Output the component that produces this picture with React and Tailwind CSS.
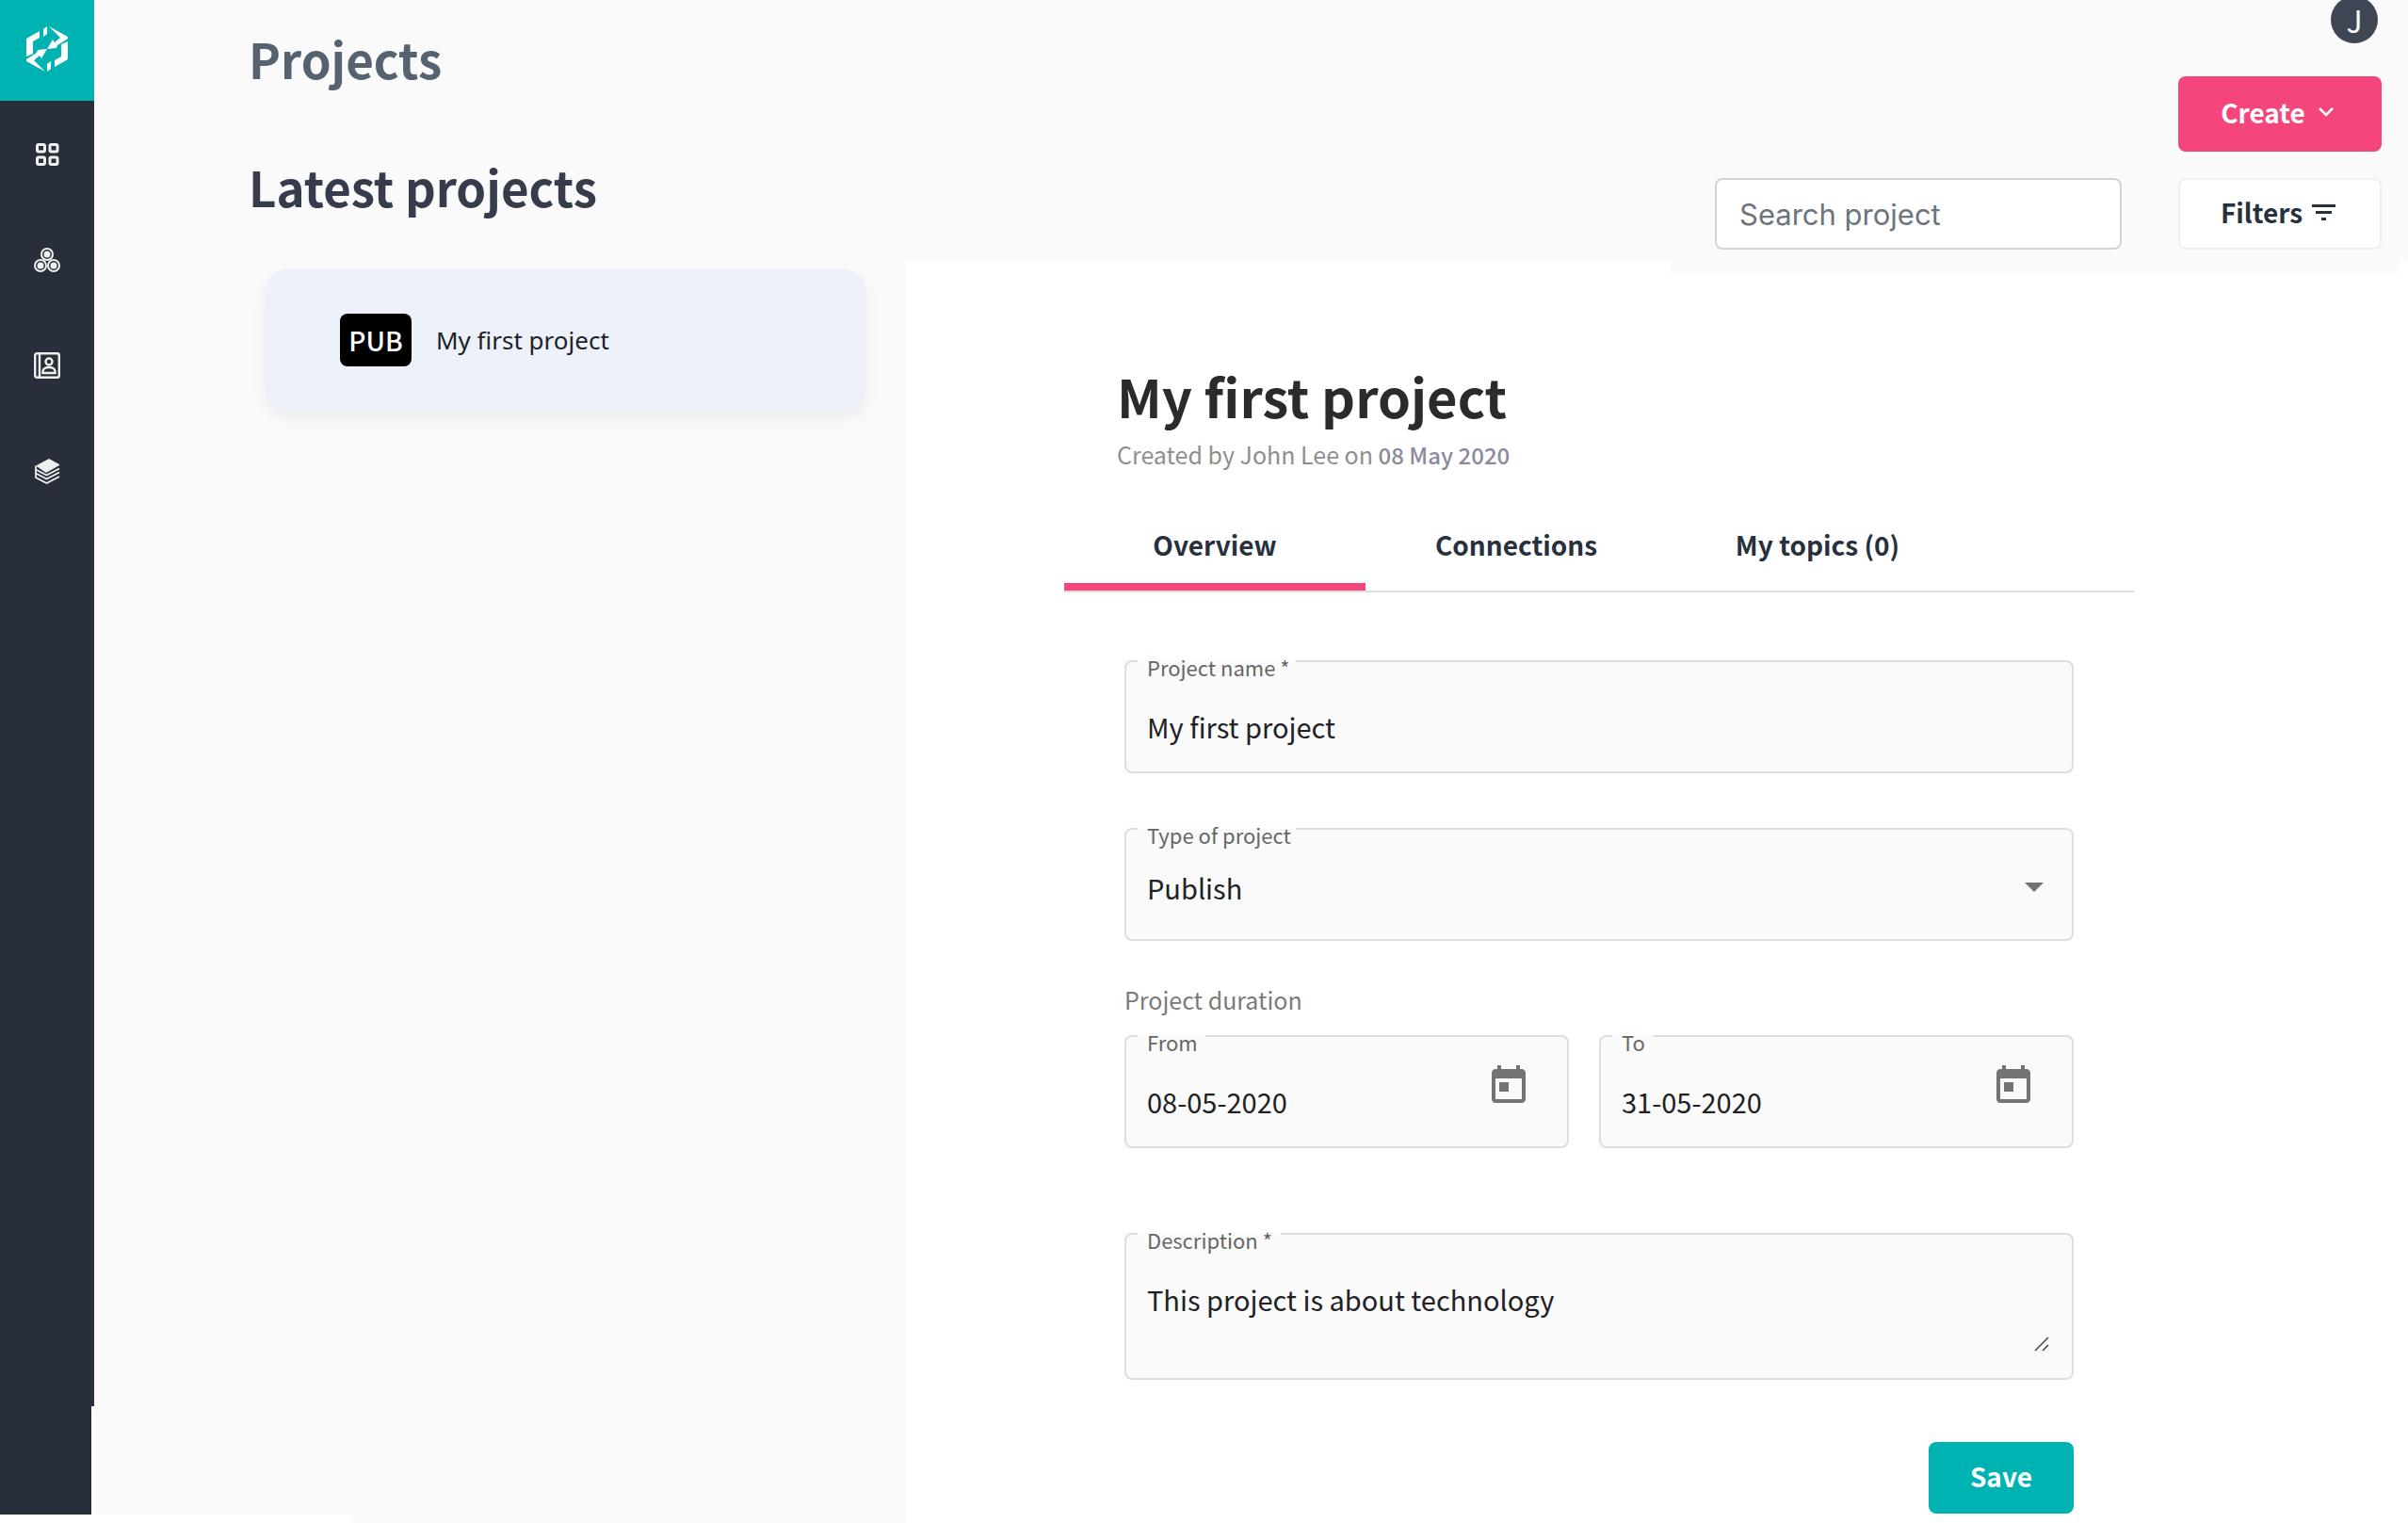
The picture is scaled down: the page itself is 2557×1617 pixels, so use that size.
import React from "react";

const CalendarIcon = () => (
  <svg viewBox="0 0 24 24" className="h-12 w-12" fill="#737373">
    <path d="M19 3h-1V1h-2v2H8V1H6v2H5c-1.11 0-1.99.9-1.99 2L3 19c0 1.1.89 2 2 2h14c1.1 0 2-.9 2-2V5c0-1.1-.9-2-2-2zm0 16H5V8h14v11zM7 10h5v5H7z" />
  </svg>
);

function Field({ id, label, className = "h-30", notch, children }) {
  return (
    <div className={`relative rounded-lg border-2 border-[#dedede] bg-[#fafafa] ${className}`}>
      <label
        htmlFor={id}
        className={`absolute -top-0.5 left-3 h-7 whitespace-nowrap bg-[#fafafa] pl-2.5 text-[22px]/[14px] text-[#666] ${notch}`}
      >
        {label}
      </label>
      {children}
    </div>
  );
}

function DateField({ id, label, value, notch, className }) {
  return (
    <Field id={id} label={label} notch={notch} className={`h-30 ${className}`}>
      <div className="flex h-full items-start justify-between pr-[38px] pl-[22px]">
        <input id={id} defaultValue={value} className="mt-[46px] h-11 w-60 min-w-0 bg-transparent text-[29px] text-[#202124] outline-none" />
        <button type="button" aria-label={`Pick ${label} date`} className="mt-7">
          <CalendarIcon />
        </button>
      </div>
    </Field>
  );
}

function NavIcon({ label, children }) {
  return (
    <a href="#" aria-label={label} className="flex h-28 w-full items-center justify-center text-[#efefef]">
      <svg viewBox="0 0 28 28" className="h-7 w-7" fill="none" stroke="currentColor">
        {children}
      </svg>
    </a>
  );
}

function Sidebar() {
  return (
    <aside className="flex w-[100px] shrink-0 flex-col">
      <a href="#" aria-label="Home" className="flex h-[107px] items-center justify-center bg-[#00b3b3]">
        <svg viewBox="0 0 46 48" className="-mt-1 h-12 w-[46px]" fill="#fff">
          <g id="half">
            <path d="M1 13 15 5v7L8 16v13L1 32z" />
            <path d="M19 3l4-3v8l-4 3z" />
            <path d="M25 0 45 11v2L34 20l-1 3-10 1 6-10 2 3 6-5z" />
          </g>
          <use href="#half" transform="rotate(180 23 24)" />
        </svg>
      </a>
      <nav className="flex grow flex-col bg-[#282e3a] pt-px">
        <NavIcon label="Dashboard">
          <g strokeWidth="3">
            <rect x="3.5" y="3.5" width="8" height="7.5" rx="1.5" />
            <rect x="17" y="3.5" width="8" height="7.5" rx="1.5" />
            <rect x="3.5" y="17" width="8" height="7.5" rx="1.5" />
            <rect x="17" y="17" width="8" height="7.5" rx="1.5" />
          </g>
        </NavIcon>
        <NavIcon label="Connections">
          {[[14, 8], [7, 20], [21, 20]].map(([x, y]) => (
            <g key={`${x}-${y}`}>
              <circle cx={x} cy={y} r="6" strokeWidth="2" />
              <circle cx={x} cy={y} r="3.5" fill="currentColor" stroke="none" />
            </g>
          ))}
        </NavIcon>
        <NavIcon label="Contacts">
          <g strokeWidth="2.4">
            <rect x="1.2" y="1.2" width="25.6" height="25.6" rx="2" />
            <path d="M6 1v26" />
            <circle cx="16" cy="10" r="3.5" />
            <path d="M9.500 22v-1.500c0-6 13-6 13 0V22z" />
          </g>
        </NavIcon>
        <NavIcon label="Topics">
          <path d="M2 8.500 16 1l11 6v1L13 16z" fill="currentColor" stroke="none" />
          <path d="M2 8.500v12.500l11.500 6L27 20M2 12.500l11.500 6L27 11.500M2 16.500l11.500 6L27 15.500" strokeWidth="1.800" />
        </NavIcon>
      </nav>
      <div className="h-[124px] border-r-[3px] border-b-[9px] border-white bg-[#282e3a]" />
    </aside>
  );
}

export default function App() {
  return (
    <div className="flex min-h-screen bg-[#fafafa] font-['Noto_Sans_CJK_SC',sans-serif]">
      <Sidebar />

      <section className="flex w-[862px] shrink-0 flex-col pt-[22px] pr-[42px] pl-41">
        <h1 className="text-[51px]/[80px] font-bold text-[#566270]">Projects</h1>
        <h2 className="mt-14 text-[51px]/[80px] font-bold text-[#363c4c]">Latest projects</h2>
        <a href="#" className="mt-12 ml-[17px] flex h-[150px] shrink-0 items-center gap-[26px] rounded-3xl bg-[#edf1f9] pl-20 shadow-[0_8px_16px_rgba(0,0,0,0.06)]">
          <span className="flex h-14 w-19 items-center justify-center rounded-lg bg-black text-[28px] font-medium text-white">PUB</span>
          <span className="font-['Noto_Sans',sans-serif] text-[26px] text-[#202228]">My first project</span>
        </a>
        <div className="mt-auto -ml-41 h-[9px] w-68 bg-white" />
      </section>

      <div className="flex min-w-0 grow flex-col">
        <header className="flex h-[278px] shrink-0 flex-col items-end pr-7">
          <button type="button" className="-mt-1 mr-1 flex h-[50px] w-[50px] items-center justify-center rounded-full bg-[#3f4653] text-[32px] text-white">J</button>
          <button type="button" className="mt-[35px] flex h-20 w-54 items-center justify-center gap-3 rounded-lg bg-[#f5467c] pr-1 pb-1 text-[28px] font-bold text-white">
            Create
            <svg viewBox="0 0 20 20" className="h-5 w-5" fill="none" stroke="currentColor" strokeWidth="2.5"><path d="M3 6l7 7 7-7" /></svg>
          </button>
          <div className="mt-7 flex gap-15">
            <input aria-label="Search project" placeholder="Search project" className="h-19 w-108 rounded-lg border-2 border-[#ced4da] bg-white px-6 font-[Inter,sans-serif] text-[31px] outline-none placeholder:text-[#6c757d]" />
            <button type="button" className="flex h-19 w-54 items-center justify-center gap-2.5 rounded-lg border-2 border-[#efefef] bg-white pr-1 pb-1 text-[28px] font-bold text-[#27303d]">
              Filters
              <svg viewBox="0 0 25 18" className="h-[18px] w-[25px]" fill="currentColor"><path d="M0 1h25v3H0zM4 8h17v3H4zM10 15h5v3h-5z" /></svg>
            </button>
          </div>
        </header>

        <main className="grow bg-white">
          <div className="mr-2.5 ml-203 h-3 bg-[#fafafa]" />
          <div className="ml-42 w-[1136px]">
            <div className="pt-[86px] pl-14">
              <h2 className="text-[56px]/[88px] font-bold text-[#2b2b2b]">My first project</h2>
              <p className="text-[25px]/[36px] text-[#8e8e8e]">
                Created by John Lee on <time className="text-[24px] font-medium text-[#8b8a9b]">08 May 2020</time>
              </p>
            </div>
            <div role="tablist" className="mt-9 flex border-b-2 border-[#e0e0e0] text-[28px] font-bold text-[#27303d]">
              <button role="tab" aria-selected="true" className="h-[90px] w-80 border-b-8 border-[#f5467c]">Overview</button>
              <button role="tab" aria-selected="false" className="h-[90px] w-80 border-b-8 border-transparent">Connections</button>
              <button role="tab" aria-selected="false" className="h-[90px] w-80 border-b-8 border-transparent">My topics (0)</button>
            </div>

            <form className="pt-18 pr-16 pl-16" onSubmit={(e) => e.preventDefault()}>
              <Field id="name" label="Project name *" notch="w-[168px]">
                <input id="name" defaultValue="My first project" className="h-full w-full bg-transparent px-[22px] pt-5 text-[29px] text-[#202124] outline-none" />
              </Field>
              <div className="mt-[58px]">
                <Field id="type" label="Type of project" notch="w-[168px]">
                  <select id="type" className="h-full w-full appearance-none bg-transparent px-[22px] pt-2 text-[29px] text-[#202124] outline-none">
                    <option>Publish</option>
                  </select>
                  <svg viewBox="0 0 20 10" className="pointer-events-none absolute top-14 right-[30px] h-2.5 w-5" fill="#737373"><path d="M0 0h20L10 10z" /></svg>
                </Field>
              </div>
              <fieldset className="mt-[42px]">
                <legend className="text-[25px]/[40px] text-[#7a7a7a]">Project duration</legend>
                <div className="mt-[18px] flex gap-8">
                  <DateField id="from" label="From" value="08-05-2020" notch="w-18" className="w-[472px]" />
                  <DateField id="to" label="To" value="31-05-2020" notch="w-11" className="grow" />
                </div>
              </fieldset>
              <div className="mt-[90px]">
                <Field id="description" label="Description *" notch="w-38" className="h-39">
                  <textarea id="description" defaultValue="This project is about technology" className="block h-full w-full resize-none bg-transparent px-[22px] pt-[46px] text-[29px]/[44px] text-[#202124] outline-none" />
                  <svg viewBox="0 0 16 16" className="pointer-events-none absolute right-6 bottom-7 h-4 w-4" fill="none" stroke="#444" strokeWidth="1.5"><path d="M1 15 15 1M9 15l6-6" /></svg>
                </Field>
              </div>
              <div className="mt-[66px] flex justify-end">
                <button type="submit" className="h-19 w-[154px] rounded-lg bg-[#00b3b3] pb-1 text-[28px] font-bold text-white">Save</button>
              </div>
            </form>
          </div>
        </main>
      </div>
    </div>
  );
}
